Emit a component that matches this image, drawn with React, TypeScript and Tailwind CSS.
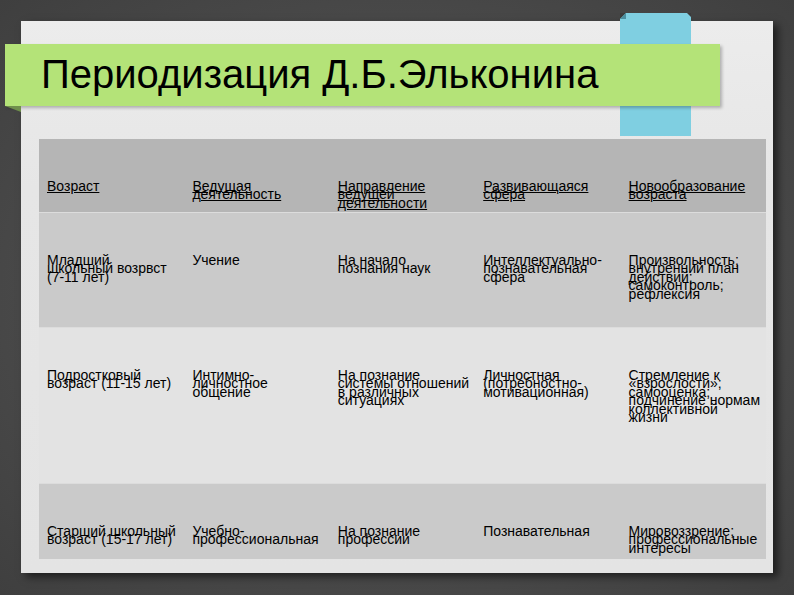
const rows: { bg: string; h: string; head?: boolean; cells: string[][] }[] = [
  {
    bg: 'bg-[#b5b5b5]',
    h: 'h-[74px]',
    head: true,
    cells: [
      ['Возраст'],
      ['Ведущая', 'деятельность'],
      ['Направление', 'ведущей', 'деятельности'],
      ['Развивающаяся', 'сфера'],
      ['Новообразование', 'возраста'],
    ],
  },
  {
    bg: 'bg-[#cacaca]',
    h: 'h-[115px]',
    cells: [
      ['Младший', 'школьный возрвст', '(7-11 лет)'],
      ['Учение'],
      ['На начало', 'познания наук'],
      ['Интеллектуально-', 'познавательная', 'сфера'],
      ['Произвольность;', 'внутренний план', 'действий;', 'самоконтроль;', 'рефлексия'],
    ],
  },
  {
    bg: 'bg-[#e3e3e3]',
    h: 'h-[156px]',
    cells: [
      ['Подростковый', 'возраст  (11-15 лет)'],
      ['Интимно-', 'личностное', 'общение'],
      ['На познание', 'системы отношений', 'в различных', 'ситуациях'],
      ['Личностная', '(потребностно-', 'мотивационная)'],
      ['Стремление к', '«взрослости»;', 'самооценка;', 'подчинение нормам', 'коллективной', 'жизни'],
    ],
  },
  {
    bg: 'bg-[#cacaca]',
    h: 'h-[75px]',
    cells: [
      ['Старший школьный', 'возраст (15-17 лет)'],
      ['Учебно-', 'профессиональная'],
      ['На познание', 'профессии'],
      ['Познавательная'],
      ['Мировоззрение;', 'профессиональные', 'интересы'],
    ],
  },
];

export default function App() {
  return (
    <div className="w-[794px] h-[595px] overflow-hidden pt-[21px] pl-[21px] bg-[radial-gradient(ellipse_at_center,#5c5c5c_0%,#4a4a4a_60%,#3f3f3f_100%)] font-['Liberation_Sans',Arial,sans-serif]">
      <div className="relative w-[752px] h-[552px] pt-[23px] bg-[linear-gradient(to_bottom,#ececec,#e6e6e6_30%,#e4e4e4)] shadow-[5px_4px_8px_rgba(0,0,0,0.55)]">
        {/* blue tab */}
        <div className="absolute left-[599px] top-[-8px] w-[71px] h-[123px] bg-[#7fcfe1]">
          <svg className="absolute left-0 top-0" width="6" height="6" viewBox="0 0 6 6">
            <path d="M0 0H6L0 6Z" fill="#3b3b3b" />
            <path d="M6 0L0 6H6Z" fill="#4a8fa0" />
          </svg>
          <svg className="absolute right-0 top-0" width="4" height="4" viewBox="0 0 4 4">
            <path d="M0 0H4V4Z" fill="#3b3b3b" />
          </svg>
        </div>

        {/* title bar */}
        <div className="relative z-10 ml-[-16px] w-[715px] h-[62px] bg-[#b4e378] shadow-[2px_2px_3px_rgba(0,0,0,0.25)] pt-[10px] pl-[36px]">
          <h1 className="text-[40px] leading-[40px] text-black whitespace-nowrap">Периодизация Д.Б.Эльконина</h1>
          <svg className="absolute left-0 top-[62px]" width="16" height="6" viewBox="0 0 16 6">
            <path d="M0 0H16V6Z" fill="#6f8f4c" />
          </svg>
        </div>

        {/* table */}
        <div className="mt-[33px] ml-[18px] w-[727px] flex flex-col">
          {rows.map((row, i) => (
            <div key={i} className={`grid grid-cols-5 ${row.bg} ${row.h} ${i < rows.length - 1 ? 'border-b border-[#dcdcdc]' : ''}`}>
              {row.cells.map((lines, j) => (
                <div key={j} className="pt-[43px] pl-[8px] pr-[4px] text-[14px] leading-[8.4px] text-black whitespace-nowrap">
                  {lines.map((line, k) => (
                    <div key={k} className={row.head ? 'underline decoration-1 underline-offset-1' : ''}>
                      {line}
                    </div>
                  ))}
                </div>
              ))}
            </div>
          ))}
        </div>
      </div>
    </div>
  );
}
